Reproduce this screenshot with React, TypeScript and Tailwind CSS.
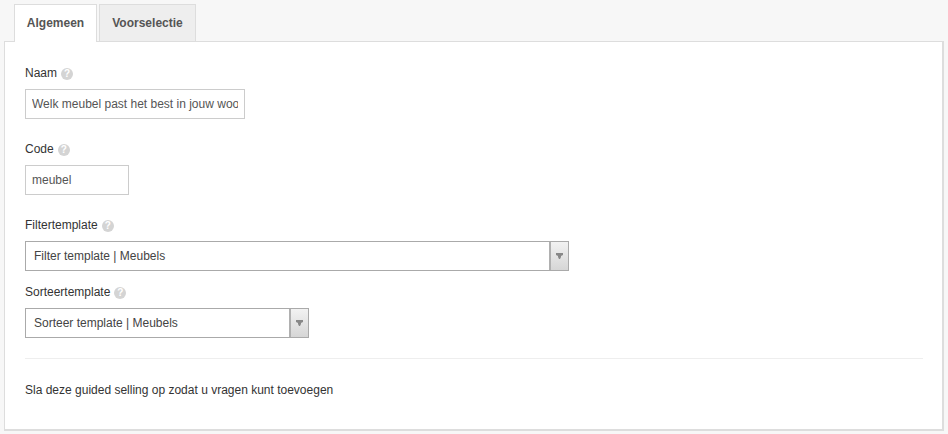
const labelClass = 'flex items-center gap-[4px] h-[16px] text-[12px] leading-[16px] text-[#333]';

function HelpIcon() {
    return (
        <span className="mt-[1px] flex h-[12px] w-[12px] items-center justify-center rounded-full bg-[#d4d4d4] text-[10px] font-bold leading-none text-white">
            ?
        </span>
    );
}

function FieldLabel({ text }: { text: string }) {
    return (
        <label className={labelClass}>
            {text}
            <HelpIcon />
        </label>
    );
}

function SelectBox({ value, width }: { value: string; width: string }) {
    return (
        <div className={`flex h-[30px] border border-[#aaa] bg-white ${width}`}>
            <span className="flex-1 pl-[8px] text-[12px] leading-[28px] text-[#444]">{value}</span>
            <span className="flex w-[19px] items-center justify-center border-l-2 border-[#b0b0b0] bg-gradient-to-b from-[#f2f2f2] to-[#d6d6d6]">
                <svg width="7" height="6" viewBox="0 0 7 6">
                    <path d="M0 0h7v2L5 3v1L4 6H3L2 4V3L0 2z" fill="#888" />
                </svg>
            </span>
        </div>
    );
}

export default function App() {
    return (
        <div className="h-[434px] w-[948px] overflow-hidden bg-[#f7f7f7] px-[4px] pt-[4px] font-['Liberation_Sans',Arial,sans-serif]">
            <div className="relative z-10 ml-[10px] flex h-[38px] gap-[2px]">
                <div className="h-[38px] w-[83px] border border-b-0 border-[#ddd] bg-white text-center text-[12px] font-bold leading-[37px] text-[#555]">
                    Algemeen
                </div>
                <div className="h-[37px] w-[97px] border border-b-0 border-[#ddd] bg-[#eee] text-center text-[12px] font-bold leading-[37px] text-[#555]">
                    Voorselectie
                </div>
            </div>
            <div className="-mt-[1px] h-[390px] w-[940px] border border-[#ddd] border-b-2 border-r-2 bg-white px-[20px] pt-[23px]">
                <FieldLabel text="Naam" />
                <input
                    readOnly
                    value="Welk meubel past het best in jouw woonkamer?"
                    className="mt-[8px] block h-[30px] w-[220px] border border-[#ccc] px-[6px] text-[12px] text-[#555] outline-none"
                />
                <div className="mt-[22px]">
                    <FieldLabel text="Code" />
                </div>
                <input
                    readOnly
                    value="meubel"
                    className="mt-[8px] block h-[30px] w-[104px] border border-[#ccc] px-[6px] text-[12px] text-[#555] outline-none"
                />
                <div className="mt-[22px]">
                    <FieldLabel text="Filtertemplate" />
                </div>
                <div className="mt-[8px]">
                    <SelectBox value="Filter template | Meubels" width="w-[544px]" />
                </div>
                <div className="mt-[13px]">
                    <FieldLabel text="Sorteertemplate" />
                </div>
                <div className="mt-[8px]">
                    <SelectBox value="Sorteer template | Meubels" width="w-[284px]" />
                </div>
                <hr className="mt-[20px] w-[898px] border-t border-[#eee]" />
                <p className="mt-[23px] text-[12px] leading-[16px] text-[#333]">
                    Sla deze guided selling op zodat u vragen kunt toevoegen
                </p>
            </div>
        </div>
    );
}
